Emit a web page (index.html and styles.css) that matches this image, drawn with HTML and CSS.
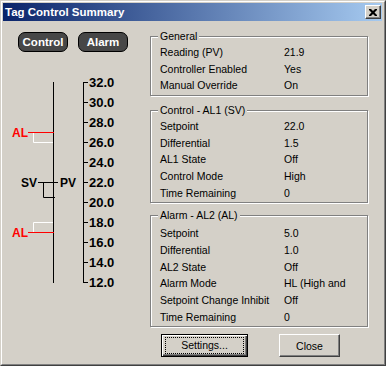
FILE: index.html
```html
<!DOCTYPE html>
<html lang="en">
<head>
  <meta charset="UTF-8" />
  <title>Tag Control Summary</title>
  <link rel="stylesheet" href="styles.css">
</head>
<body>
  <div class="window">
    <div class="frame">
      <div class="titlebar">
        <span class="title">Tag Control Summary</span>
        <button class="close-btn" aria-label="Close">
          <svg width="8" height="7" viewBox="0 0 8 7"><path d="M0 0h2l2 2 2-2h2v1l-2.5 2.5L8 6v1H6L4 5 2 7H0V6l2.5-2.5L0 1z" fill="#000"/></svg>
        </button>
      </div>
      <div class="content">
        <div class="left">
          <div class="modes">
            <span class="pill">Control</span>
            <span class="pill">Alarm</span>
          </div>
          <svg class="scale" width="147" height="240" viewBox="3 60 147 240">
            <!-- bar -->
            <line x1="53.5" y1="82" x2="53.5" y2="283" stroke="#000" />
            <!-- axis -->
            <line x1="83.5" y1="82" x2="83.5" y2="283" stroke="#000" />
            <g id="ticks" stroke="#000"></g>
            <g id="labels" class="tick-label"></g>

            <!-- AL1 -->
            <polyline points="33.5,133 33.5,142.5 53,142.5" fill="none" stroke="#fff" />
            <line x1="28" y1="132.5" x2="54" y2="132.5" stroke="#f00" />
            <text class="mark red" x="12" y="137">AL</text>

            <!-- SV / PV -->
            <line x1="38" y1="182.5" x2="53" y2="182.5" stroke="#000" />
            <polyline points="43.5,183 43.5,197.5 55,197.5" fill="none" stroke="#000" />
            <line x1="54" y1="182.5" x2="58" y2="182.5" stroke="#000" />
            <text class="mark" x="21" y="187">SV</text>
            <text class="mark" x="60" y="187">PV</text>

            <!-- AL2 -->
            <polyline points="33.5,232 33.5,222.5 53,222.5" fill="none" stroke="#fff" />
            <line x1="28" y1="232.5" x2="54" y2="232.5" stroke="#f00" />
            <text class="mark red" x="12" y="237">AL</text>
          </svg>
        </div>

        <div class="right">
          <div class="group general">
            <div class="group-title">General</div>
            <div class="rows">
              <div class="row"><span class="label">Reading (PV)</span><span>21.9</span></div>
              <div class="row"><span class="label">Controller Enabled</span><span>Yes</span></div>
              <div class="row"><span class="label">Manual Override</span><span>On</span></div>
            </div>
          </div>

          <div class="group control">
            <div class="group-title">Control - AL1 (SV)</div>
            <div class="rows">
              <div class="row"><span class="label">Setpoint</span><span>22.0</span></div>
              <div class="row"><span class="label">Differential</span><span>1.5</span></div>
              <div class="row"><span class="label">AL1 State</span><span>Off</span></div>
              <div class="row"><span class="label">Control Mode</span><span>High</span></div>
              <div class="row"><span class="label">Time Remaining</span><span>0</span></div>
            </div>
          </div>

          <div class="group alarm">
            <div class="group-title">Alarm - AL2 (AL)</div>
            <div class="rows">
              <div class="row"><span class="label">Setpoint</span><span>5.0</span></div>
              <div class="row"><span class="label">Differential</span><span>1.0</span></div>
              <div class="row"><span class="label">AL2 State</span><span>Off</span></div>
              <div class="row"><span class="label">Alarm Mode</span><span>HL (High and</span></div>
              <div class="row"><span class="label">Setpoint Change Inhibit</span><span>Off</span></div>
              <div class="row"><span class="label">Time Remaining</span><span>0</span></div>
            </div>
          </div>

          <div class="actions">
            <button class="btn default"><span class="focus">Settings...</span></button>
            <button class="btn close">Close</button>
          </div>
        </div>
      </div>
    </div>
  </div>

  <script>
    // scale from 32.0 down to 12.0, 10px per unit
    const ticks = document.getElementById('ticks');
    const labels = document.getElementById('labels');
    const ns = 'http://www.w3.org/2000/svg';
    for (let v = 32; v >= 12; v -= 2) {
      const y = 82 + (32 - v) * 10;
      const line = document.createElementNS(ns, 'line');
      line.setAttribute('x1', 83);
      line.setAttribute('x2', 88);
      line.setAttribute('y1', y + 0.5);
      line.setAttribute('y2', y + 0.5);
      ticks.appendChild(line);
      const t = document.createElementNS(ns, 'text');
      t.setAttribute('x', 89);
      t.setAttribute('y', y + 5);
      t.textContent = v.toFixed(1);
      labels.appendChild(t);
    }
  </script>
</body>
</html>
```

FILE: styles.css
```css
body {
  margin: 0;
  background: #d4d0c8;
  font-family: "Liberation Sans", Arial, sans-serif;
  font-size: 10.5px;
  color: #000;
}

.window {
  width: 386px;
  height: 366px;
  box-sizing: border-box;
  border: 1px solid;
  border-color: #d4d0c8 #404040 #404040 #d4d0c8;
}
.frame {
  height: 100%;
  box-sizing: border-box;
  border: 1px solid;
  border-color: #fff #808080 #808080 #fff;
  padding: 1px 2px 2px 1px;
  display: flex;
  flex-direction: column;
}

.titlebar {
  height: 18px;
  flex: none;
  display: flex;
  align-items: center;
  justify-content: space-between;
  padding: 0 1px 0 2px;
  background: linear-gradient(to right, #0a246a, #a6caf0);
}
.title {
  color: #fff;
  font-weight: bold;
  font-size: 11.5px;
}
.close-btn {
  width: 16px;
  height: 14px;
  padding: 0;
  display: flex;
  align-items: center;
  justify-content: center;
  background: #d4d0c8;
  border: 1px solid;
  border-color: #fff #404040 #404040 #fff;
  box-shadow: inset -1px -1px #808080, inset 1px 1px #d4d0c8;
}
.close-btn svg { display: block; margin-left: -1px; }

.content {
  flex: 1;
  display: flex;
}

.left { width: 147px; flex: none; }
.modes {
  display: flex;
  gap: 10px;
  margin: 11px 0 0 15px;
}
.pill {
  width: 50px;
  height: 20px;
  box-sizing: border-box;
  display: flex;
  align-items: center;
  justify-content: center;
  background: #474747;
  border: 1px solid #000;
  border-radius: 7px;
  color: #fff;
  font-weight: bold;
  font-size: 11.5px;
}
.scale { display: block; margin-top: 8px; }
.tick-label, .mark {
  font-family: "Liberation Sans", Arial, sans-serif;
  font-weight: bold;
}
.tick-label { font-size: 13px; }
.mark { font-size: 12px; }
.red { fill: #f00; }

.right { width: 220px; flex: none; }
.group {
  width: 218px;
  box-sizing: border-box;
  border: 1px solid #808080;
  box-shadow: inset 1px 1px #fff, 1px 1px #fff;
  padding: 0 0 1px 9px;
}
.group.general { margin-top: 15px; }
.group.control { margin-top: 14px; }
.group.alarm { margin-top: 12px; }
.group.alarm .rows { margin-top: 3px; }

.group-title {
  width: fit-content;
  margin: -7px 0 0 -2px;
  padding: 0 2px;
  line-height: 13px;
  background: #d4d0c8;
}
.rows { margin-top: 1px; }
.row {
  display: flex;
  height: 16.67px;
  line-height: 16.67px;
  white-space: nowrap;
}
.label { width: 124px; flex: none; }

.actions {
  display: flex;
  gap: 31px;
  margin: 7px 0 0 11px;
}
.btn {
  height: 23px;
  padding: 0;
  font: inherit;
  color: #000;
  background: #d4d0c8;
  border: 1px solid;
  border-color: #fff #404040 #404040 #fff;
  box-shadow: inset -1px -1px #808080, inset 1px 1px #d4d0c8;
}
.btn.default {
  width: 87px;
  border-color: #000;
  box-shadow: inset 1px 1px #fff, inset -1px -1px #404040, inset -2px -2px #808080;
}
.btn.close { width: 61px; }
.focus {
  display: block;
  margin: 0 3px;
  height: 15px;
  line-height: 15px;
  border: 1px dotted #000;
}
```
